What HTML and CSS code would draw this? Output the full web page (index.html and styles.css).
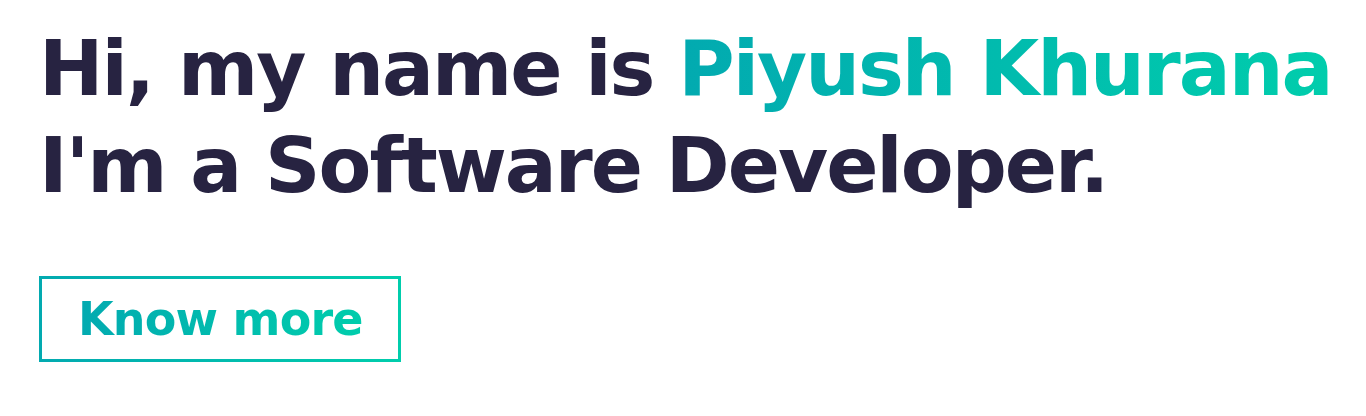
FILE: index.html
```html
<!DOCTYPE html>
<html lang="en">
<head>
<meta charset="utf-8">
<title>Piyush Khurana</title>
<link rel="stylesheet" href="styles.css">
</head>
<body>
<section class="hero">
  <h1 class="hero-title">Hi, my name is <span class="text-gradient">Piyush Khurana</span><br>I'm a Software Developer.</h1>
  <a class="cta" href="#about"><span class="text-gradient">Know more</span></a>
</section>
</body>
</html>
```
FILE: styles.css
```css
html, body {
  margin: 0;
  padding: 0;
  background: #ffffff;
}

.hero {
  display: flex;
  flex-direction: column;
  align-items: flex-start;
  padding: 20px 0 0 39px;
  font-family: "DejaVu Sans", "Noto Sans", sans-serif;
}

.hero-title {
  margin: 0;
  font-size: 77px;
  font-weight: 700;
  line-height: 97px;
  letter-spacing: -2px;
  color: #272341;
  white-space: nowrap;
}

.text-gradient {
  background-image: linear-gradient(to right, #02aab0 0%, #00cdac 100%);
  -webkit-background-clip: text;
  background-clip: text;
  color: transparent;
  -webkit-text-fill-color: transparent;
}

.cta {
  margin-top: 62px;
  display: flex;
  align-items: center;
  box-sizing: border-box;
  width: 362px;
  height: 86px;
  padding: 0 0 0 36px;
  border: 3px solid #02aab0;
  border-image: linear-gradient(to right, #02aab0, #00cdac) 1;
  text-decoration: none;
  font-size: 46px;
  font-weight: 700;
  line-height: 1;
  letter-spacing: -0.8px;
  white-space: nowrap;
}
```
